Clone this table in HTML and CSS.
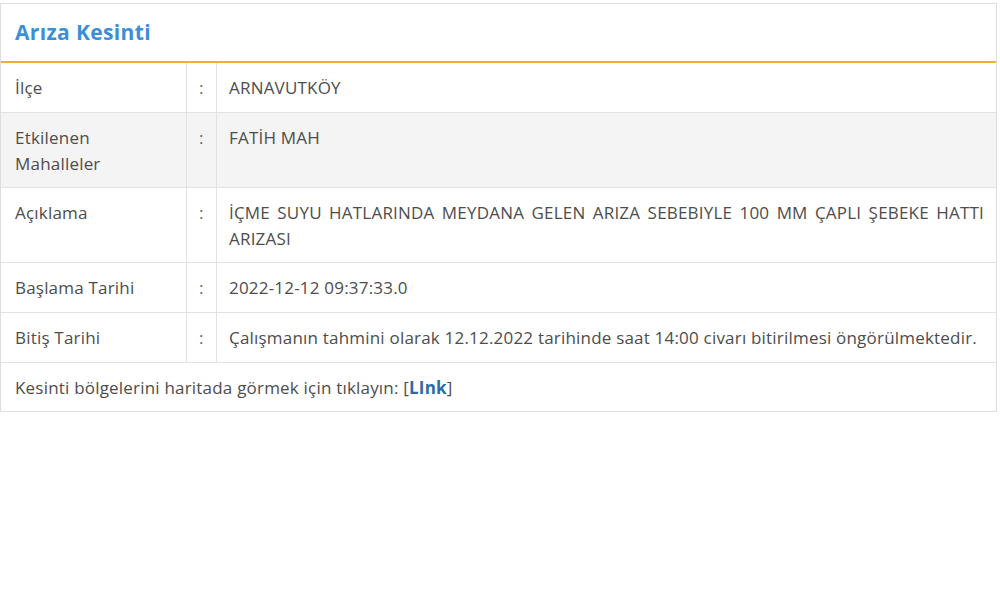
FILE: index.html
```html
<!DOCTYPE html>
<html lang="tr">
<head>
<meta charset="utf-8">
<link rel="stylesheet" href="styles.css">
</head>
<body>
<div class="panel">
  <div class="panel-head"><h2 class="title">Arıza Kesinti</h2></div>
  <div class="row">
    <div class="label">İlçe</div><div class="colon">:</div><div class="value">ARNAVUTKÖY</div>
  </div>
  <div class="row alt tall">
    <div class="label">Etkilenen Mahalleler</div><div class="colon">:</div><div class="value">FATİH MAH</div>
  </div>
  <div class="row tall">
    <div class="label">Açıklama</div><div class="colon">:</div><div class="value justify">İÇME SUYU HATLARINDA MEYDANA GELEN ARIZA SEBEBIYLE 100 MM ÇAPLI ŞEBEKE HATTI ARIZASI</div>
  </div>
  <div class="row">
    <div class="label">Başlama Tarihi</div><div class="colon">:</div><div class="value">2022-12-12 09:37:33.0</div>
  </div>
  <div class="row">
    <div class="label">Bitiş Tarihi</div><div class="colon">:</div><div class="value">Çalışmanın tahmini olarak 12.12.2022 tarihinde saat 14:00 civarı bitirilmesi öngörülmektedir.</div>
  </div>
  <div class="foot">Kesinti bölgelerini haritada görmek için tıklayın: [<a class="link" href="#">LInk</a>]</div>
</div>
</body>
</html>
```
FILE: styles.css
```css
* { box-sizing: border-box; }
body {
  margin: 0;
  padding-top: 3px;
  background: #fff;
  font-family: "Open Sans", "Noto Sans", sans-serif;
  font-size: 17px;
  letter-spacing: 0.2px;
  color: #4d4d4d;
}
.panel {
  width: 997px;
  border: 1px solid #dedede;
}
.panel-head {
  height: 59px;
  border-bottom: 2px solid #efb030;
  display: flex;
  align-items: center;
  padding-left: 14px;
  padding-bottom: 2px;
}
.title {
  margin: 0;
  font-size: 21px;
  font-weight: 700;
  letter-spacing: 0.35px;
  color: #3b8fd6;
}
.row {
  display: flex;
  border-bottom: 1px solid #e2e2e2;
  min-height: 50px;
  line-height: 26px;
}
.row.tall { min-height: 75px; }
.row.alt { background: #f4f4f4; }
.label {
  width: 186px;
  flex: none;
  padding: 12px 14px 10px;
  border-right: 1px solid #e2e2e2;
}
.colon {
  width: 30px;
  flex: none;
  padding: 12px 0 0 12px;
  border-right: 1px solid #e2e2e2;
  color: #666;
}
.value {
  flex: 1;
  padding: 12px 12px 10px 12px;
}
.justify { text-align: justify; }
.foot {
  height: 48px;
  line-height: 26px;
  padding: 12px 14px 10px;
}
.link {
  color: #2e6aa8;
  font-weight: 700;
  text-decoration: none;
}
```
